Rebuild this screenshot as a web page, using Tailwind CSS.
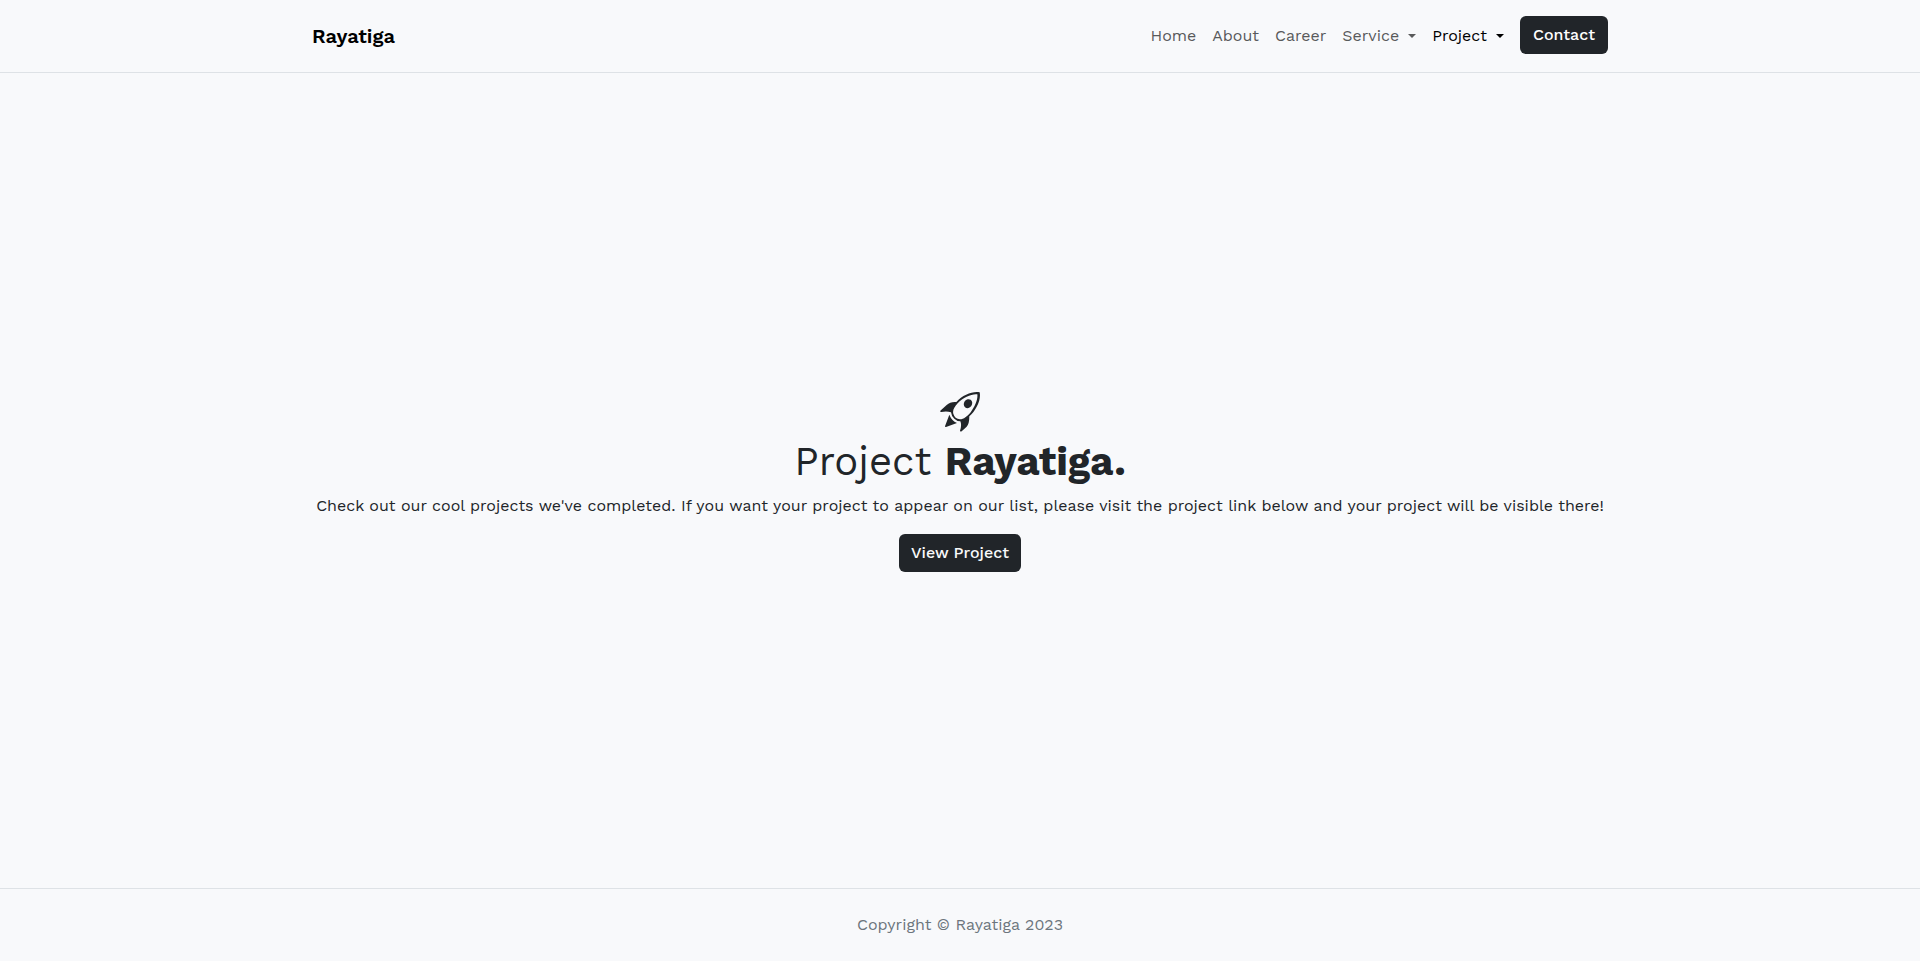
<!DOCTYPE html>
<html lang="en">
<head>
<meta charset="utf-8">
<meta name="viewport" content="width=device-width, initial-scale=1">
<title>Project - Rayatiga</title>
<script src="https://cdn.jsdelivr.net/npm/@tailwindcss/browser@4"></script>
</head>
<body class="flex min-h-screen flex-col bg-[#f8f9fb] font-['Work_Sans','Inter',sans-serif] text-base text-[#212529]">
<header class="border-b border-[#dee2e6]">
  <nav class="mx-auto flex w-full max-w-[1320px] flex-wrap items-center justify-between px-3 py-4">
    <a href="#" class="text-xl font-semibold text-black">Rayatiga</a>
    <div class="flex flex-wrap items-center gap-4 text-[#595a5b]">
      <a href="#" class="py-2">Home</a>
      <a href="#" class="py-2">About</a>
      <a href="#" class="py-2">Career</a>
      <button type="button" class="flex items-center gap-[9px] py-2">Service <svg class="w-2" viewBox="0 0 8 4" fill="currentColor" aria-hidden="true"><path d="M0 0h8L4 4z"/></svg></button>
      <button type="button" class="flex items-center gap-[9px] py-2 text-black">Project <svg class="w-2" viewBox="0 0 8 4" fill="currentColor" aria-hidden="true"><path d="M0 0h8L4 4z"/></svg></button>
      <a href="#" class="self-start rounded-md bg-[#212529] px-[13px] py-[7px] font-medium text-white">Contact</a>
    </div>
  </nav>
</header>
<main class="flex flex-1 flex-col items-center justify-center px-3 text-center">
  <svg class="mt-0.5 size-10" viewBox="0 0 120 120" aria-hidden="true">
    <path fill="#212529" fill-rule="evenodd" d="M119 1C98-3 68 9 49 30C36 29 28 32 20 39L1 56Q0 60 4 60Q20 56 33 61Q34 72 43 80Q51 88 61 88Q66 98 60 116Q61 120 65 118L80 104Q88 96 88 73C108 56 124 24 119 1ZM112 7C95 5 70 16 53 34C43 45 37 55 40 65Q44 80 60 82C71 82 82 72 91 62C105 44 114 23 112 7Z"/>
    <ellipse cx="84" cy="35" rx="12" ry="14" transform="rotate(35 84 35)" fill="#212529"/>
    <path fill="#212529" d="M28 68L15 103Q15 106 18 105L51 93Q35 86 28 68Z"/>
  </svg>
  <h1 class="mt-1.5 text-[40px] leading-12 font-normal">Project <b class="font-bold">Rayatiga.</b></h1>
  <p class="mt-2 text-base">Check out our cool projects we've completed. If you want your project to appear on our list, please visit the project link below and your project will be visible there!</p>
  <a href="#" class="mt-4 rounded-md bg-[#212529] px-3 py-[7px] font-medium text-[#f8f9fa]">View Project</a>
</main>
<footer class="border-t border-[#dee2e6] px-3 py-6 text-center text-[#6c757d]">Copyright © Rayatiga 2023</footer>
</body>
</html>
